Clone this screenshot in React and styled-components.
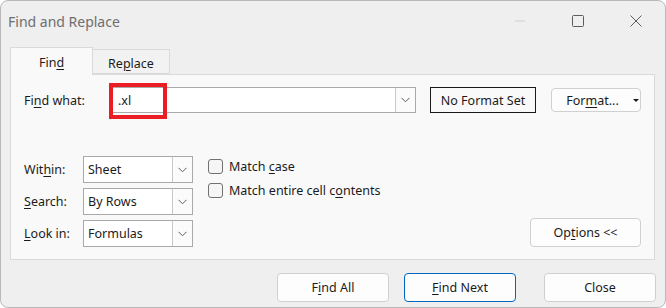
import React from "react";
import styled, { createGlobalStyle } from "styled-components";

const Global = createGlobalStyle`
  html, body { margin: 0; padding: 0; background: #ffffff; }
  body { font-family: "Noto Sans", "Open Sans", sans-serif; }
`;

const Window = styled.div`
  box-sizing: border-box;
  width: 666px;
  height: 308px;
  background: #efefef;
  border: 1px solid #b9b9b9;
  border-radius: 8px;
  overflow: hidden;
  display: flex;
  flex-direction: column;
  color: #1b1b1b;
  font-size: 12.5px;
`;

const TitleBar = styled.div`
  height: 39px;
  display: flex;
  align-items: center;
  justify-content: space-between;
  padding-left: 7px;
`;

const Title = styled.div`
  font-size: 14px;
  color: #6e6e6e;
  padding-top: 1px;
`;

const Controls = styled.div`
  display: flex;
  align-items: center;
  height: 100%;
`;

const CtrlBtn = styled.div`
  width: 58px;
  height: 100%;
  display: flex;
  align-items: center;
  justify-content: center;
`;

const Body = styled.div`
  padding: 7px 9px 0 9px;
  display: flex;
  flex-direction: column;
`;

const Tabs = styled.div`
  display: flex;
  align-items: flex-end;
  height: 27px;
  position: relative;
  z-index: 1;
`;

const Tab = styled.div`
  box-sizing: border-box;
  height: ${(p) => (p.$active ? "28px" : "25px")};
  width: ${(p) => p.$w}px;
  display: flex;
  align-items: center;
  justify-content: center;
  padding-top: ${(p) => (p.$active ? "2px" : "3px")};
  margin-bottom: ${(p) => (p.$active ? "-1px" : "0")};
  background: ${(p) => (p.$active ? "#f9f9f9" : "#f2f2f2")};
  border: 1px solid #dadada;
  border-bottom: ${(p) => (p.$active ? "none" : "1px solid #dadada")};
  border-left: ${(p) => (p.$active ? "1px solid #dadada" : "none")};
`;

const Panel = styled.div`
  box-sizing: border-box;
  width: 645px;
  height: 186px;
  background: #f9f9f9;
  border: 1px solid #dadada;
  padding: 12px 13px 0 13px;
  display: flex;
  flex-direction: column;
`;

const FindRow = styled.div`
  display: flex;
  align-items: center;
  height: 26px;
`;

const FindLabel = styled.div`
  width: 86px;
`;

const U = styled.span`
  text-decoration: underline;
  text-underline-offset: 2px;
`;

const ComboWrap = styled.div`
  position: relative;
  box-sizing: border-box;
  width: ${(p) => p.$w}px;
  height: ${(p) => p.$h}px;
  display: flex;
  background: #ffffff;
  border: 1px solid #a9a9a9;
`;

const ComboText = styled.div`
  flex: 1;
  display: flex;
  align-items: center;
  padding-left: ${(p) => p.$pad}px;
`;

const DropBtn = styled.div`
  box-sizing: border-box;
  width: 20px;
  border-left: 1px solid #c8c8c8;
  background: #fbfbfb;
  display: flex;
  align-items: center;
  justify-content: center;
`;

const Highlight = styled.div`
  position: absolute;
  left: -2px;
  top: -5px;
  width: 58px;
  height: 36px;
  box-sizing: border-box;
  border: 4px solid #ec1c24;
  pointer-events: none;
`;

const FormatBox = styled.div`
  box-sizing: border-box;
  width: 106px;
  height: 26px;
  margin-left: 14px;
  border: 1px solid #1a1a1a;
  display: flex;
  align-items: center;
  justify-content: center;
`;

const Button = styled.div`
  box-sizing: border-box;
  width: ${(p) => p.$w}px;
  height: ${(p) => p.$h}px;
  background: #fdfdfd;
  border: 1px solid ${(p) => (p.$primary ? "#0067c0" : "#d0d0d0")};
  border-radius: 4px;
  display: flex;
  align-items: center;
  justify-content: center;
  gap: 10px;
  margin-left: ${(p) => p.$ml || 0}px;
`;

const Caret = styled.span`
  width: 0;
  height: 0;
  border-left: 3px solid transparent;
  border-right: 3px solid transparent;
  border-top: 3px solid #1b1b1b;
  margin-left: 4px;
  margin-right: -13px;
`;

const Lower = styled.div`
  display: flex;
  margin-top: 43px;
  align-items: flex-start;
`;

const SelectGrid = styled.div`
  display: grid;
  grid-template-columns: 59px 110px;
  row-gap: 5px;
  align-items: center;
`;

const Checks = styled.div`
  display: flex;
  flex-direction: column;
  gap: 9px;
  margin-left: 15px;
  padding-top: 3px;
`;

const CheckRow = styled.label`
  display: flex;
  align-items: center;
  gap: 6px;
  height: 15px;
`;

const Box = styled.span`
  box-sizing: border-box;
  width: 15px;
  height: 15px;
  border: 1px solid #707070;
  border-radius: 3px;
  background: #f5f5f5;
`;

const Spacer = styled.div`
  flex: 1;
`;

const OptionsCol = styled.div`
  align-self: flex-end;
`;

const Footer = styled.div`
  display: flex;
  justify-content: flex-end;
  margin-top: 13px;
`;

const Chevron = () => (
  <svg width="9" height="6" viewBox="0 0 9 6">
    <path d="M0.5 0.8 L4.5 4.8 L8.5 0.8" fill="none" stroke="#5a5a5a" strokeWidth="1" />
  </svg>
);

const Select = ({ value }) => (
  <ComboWrap $w={110} $h={27}>
    <ComboText $pad={4}>{value}</ComboText>
    <DropBtn>
      <Chevron />
    </DropBtn>
  </ComboWrap>
);

export default function App() {
  return (
    <>
      <Global />
      <Window>
        <TitleBar>
          <Title>Find and Replace</Title>
          <Controls>
            <CtrlBtn>
              <svg width="10" height="2" viewBox="0 0 10 2">
                <path d="M0 1 H10" stroke="#cfcfcf" strokeWidth="1" />
              </svg>
            </CtrlBtn>
            <CtrlBtn>
              <svg width="12" height="12" viewBox="0 0 12 12">
                <rect x="0.5" y="0.5" width="11" height="11" rx="1" fill="none" stroke="#5c5c5c" strokeWidth="1" />
              </svg>
            </CtrlBtn>
            <CtrlBtn>
              <svg width="12" height="12" viewBox="0 0 12 12">
                <path d="M0.5 0.5 L11.5 11.5 M11.5 0.5 L0.5 11.5" stroke="#5c5c5c" strokeWidth="1" />
              </svg>
            </CtrlBtn>
          </Controls>
        </TitleBar>
        <Body>
          <Tabs>
            <Tab $active $w={83}>
              <span>
                Fin<U>d</U>
              </span>
            </Tab>
            <Tab $w={77}>
              <span>
                Re<U>p</U>lace
              </span>
            </Tab>
          </Tabs>
          <Panel>
            <FindRow>
              <FindLabel>
                Fi<U>n</U>d what:
              </FindLabel>
              <ComboWrap $w={306} $h={26}>
                <ComboText $pad={7}>.xl</ComboText>
                <DropBtn>
                  <Chevron />
                </DropBtn>
                <Highlight />
              </ComboWrap>
              <FormatBox>No Format Set</FormatBox>
              <Button $w={90} $h={24} $ml={15}>
                <span>
                  For<U>m</U>at...
                </span>
                <Caret />
              </Button>
            </FindRow>
            <Lower>
              <SelectGrid>
                <span>
                  Wit<U>h</U>in:
                </span>
                <Select value="Sheet" />
                <span>
                  <U>S</U>earch:
                </span>
                <Select value="By Rows" />
                <span>
                  <U>L</U>ook in:
                </span>
                <Select value="Formulas" />
              </SelectGrid>
              <Checks>
                <CheckRow>
                  <Box />
                  <span>
                    Match <U>c</U>ase
                  </span>
                </CheckRow>
                <CheckRow>
                  <Box />
                  <span>
                    Match entire cell c<U>o</U>ntents
                  </span>
                </CheckRow>
              </Checks>
              <Spacer />
              <OptionsCol>
                <Button $w={111} $h={29}>
                  <span>
                    Op<U>t</U>ions &lt;&lt;
                  </span>
                </Button>
              </OptionsCol>
            </Lower>
          </Panel>
          <Footer>
            <Button $w={112} $h={29}>
              <span>
                F<U>i</U>nd All
              </span>
            </Button>
            <Button $w={112} $h={29} $ml={15} $primary>
              <span>
                <U>F</U>ind Next
              </span>
            </Button>
            <Button $w={112} $h={29} $ml={28}>
              Close
            </Button>
          </Footer>
        </Body>
      </Window>
    </>
  );
}
